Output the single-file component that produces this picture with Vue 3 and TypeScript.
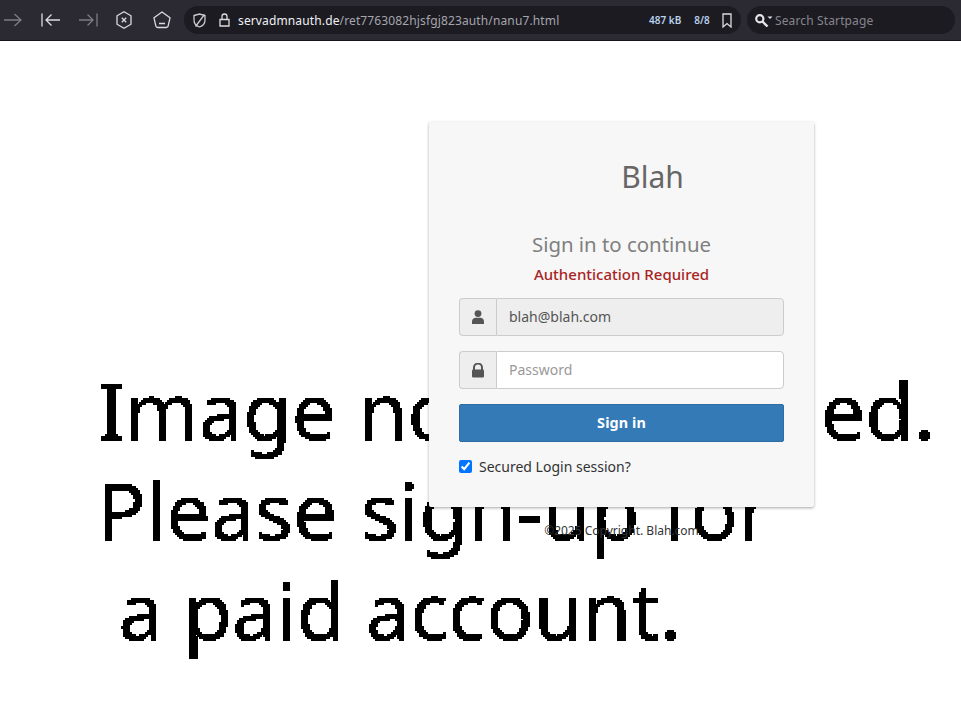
<script setup lang="ts">
const lines: string[] = ['Image not sanctioned.', 'Please sign-up for', ' a paid account.']
</script>

<template>
  <div class="root">
    <header class="toolbar">
      <div class="nav">
        <svg class="ic dim" width="18" height="16" viewBox="0 0 18 16"><path d="M0 8h17M10.500 2l6.500 6-6.500 6" /></svg>
        <svg class="ic" width="19" height="16" viewBox="0 0 19 16"><path d="M1 1.500v13M19 8H5M10.500 2.500 5 8l5.500 5.500" /></svg>
        <svg class="ic dim" width="19" height="16" viewBox="0 0 19 16"><path d="M18 1.500v13M0 8h14M8.500 2.500 14 8l-5.500 5.500" /></svg>
        <svg class="ic hex" width="16" height="18" viewBox="0 0 16 18"><path d="M8 .8l7 4v8.400l-7 4-7-4V4.800zM5.800 6.800l4.400 4.400M10.200 6.800l-4.400 4.400" /></svg>
        <svg class="ic" width="18" height="18" viewBox="0 0 18 18"><path d="M9 1l8 5.800-1.800 8.100a2 2 0 0 1-2 1.600H4.800a2 2 0 0 1-2-1.600L1 6.800zM6 12.500h6" /></svg>
      </div>
      <div class="urlbar">
        <svg class="ic shield" width="13" height="15" viewBox="0 0 13 15"><path d="M1 2.500 6.500 1 12 2.500V7c0 3.500-2.500 6-5.500 7C3.500 13 1 10.500 1 7zM11.500 1.500 2.500 13.500" /></svg>
        <svg class="ic padlock" width="11" height="14" viewBox="0 0 11 14"><path d="M1 6.500h9v6.500H1zM3 6.500V3.500a2.500 2.500 0 0 1 5 0v3" /></svg>
        <div class="url"><span class="host">servadmnauth</span><span class="tld">.de</span>/ret7763082hjsfgj823auth/nanu7.html</div>
        <span class="stat size">487 kB</span>
        <span class="stat count">8/8</span>
        <svg class="ic mark" width="10" height="15" viewBox="0 0 10 15"><path d="M1 1h8v13L5 10.500 1 14z" /></svg>
      </div>
      <div class="searchbar">
        <svg width="18" height="13" viewBox="0 0 18 13" class="lens"><circle cx="4.800" cy="4.800" r="3.600" fill="none" stroke="#e4e4e8" stroke-width="2.200" /><path d="M7.500 7.500 12.500 12.500" stroke="#e4e4e8" stroke-width="2.400" /><path d="M12.500 2.500h5l-2.500 2.500z" fill="#e4e4e8" /></svg>
        <span class="placeholder">Search Startpage</span>
      </div>
    </header>

    <main class="page">
      <svg class="defs" width="0" height="0" aria-hidden="true">
        <filter id="hard" x="0" y="0" width="100%" height="100%" color-interpolation-filters="sRGB">
          <feFlood x="0" y="0" width="1" height="1" flood-color="#000" />
          <feComposite width="2" height="2" />
          <feTile result="grid" />
          <feComposite in="SourceGraphic" in2="grid" operator="in" />
          <feComponentTransfer>
            <feFuncA type="discrete" tableValues="0 0 0 1" />
          </feComponentTransfer>
          <feMorphology operator="dilate" radius="1" />
        </filter>
      </svg>
      <div class="poster">
        <div v-for="line in lines" :key="line" class="poster-line">{{ line }}</div>
      </div>

      <section class="card">
        <h1 class="brand">Blah</h1>
        <h2 class="subtitle">Sign in to continue</h2>
        <p class="alert">Authentication Required</p>
        <div class="group">
          <span class="addon">
            <svg width="14" height="14" viewBox="0 0 14 14"><circle cx="7" cy="3.600" r="3.400" fill="#555" /><path d="M1 14v-2.500C1 9 3 7.800 4.500 7.800h5C11 7.800 13 9 13 11.500V14z" fill="#555" /></svg>
          </span>
          <input class="field readonly" type="text" value="blah@blah.com" readonly />
        </div>
        <div class="group">
          <span class="addon">
            <svg width="14" height="15" viewBox="0 0 14 15"><path d="M3 7V4.500a4 4 0 0 1 8 0V7" fill="none" stroke="#555" stroke-width="2" /><rect x="1" y="6.500" width="12" height="8" rx="1.200" fill="#555" /></svg>
          </span>
          <input class="field" type="password" placeholder="Password" />
        </div>
        <button class="submit" type="button">Sign in</button>
        <label class="check"><input type="checkbox" checked /><span>Secured Login session?</span></label>
      </section>

      <footer class="copy">©2025 Copyright. Blah.com</footer>
    </main>
  </div>
</template>

<style>
html, body { margin: 0; background: #fff; }
</style>

<style scoped>
.root { width: 961px; height: 720px; overflow: hidden; font-family: "Noto Sans", sans-serif; }
.toolbar { height: 40px; box-sizing: content-box; border-bottom: 1px solid #14141a; background: #2b2a33; display: flex; align-items: center; padding: 0 6px 0 4px; }
.nav { display: flex; align-items: center; width: 180px; flex: none; gap: 19px; }
.ic { fill: none; stroke: #dcdce0; stroke-width: 1.300; flex: none; }
.dim { stroke: #7d7c83; }
.hex { margin-right: 1px; transform: translateX(-1px); }
.urlbar { width: 557px; height: 28px; flex: none; box-sizing: border-box; border-radius: 14px; background: #1c1b22; display: flex; align-items: center; padding-left: 9px; color: #a5a5ac; font-size: 12px; }
.shield { stroke: #c9c9ce; }
.padlock { margin-left: 13px; }
.url { margin-left: 8px; width: 411px; flex: none; white-space: nowrap; letter-spacing: .13px; }
.host, .tld { color: #f0f0f4; }
.stat { font-size: 10px; font-weight: 600; color: #b9d2ee; flex: none; }
.count { margin-left: 13px; }
.mark { margin-left: 12px; }
.searchbar { width: 208px; height: 28px; flex: none; box-sizing: border-box; margin-left: 6px; border-radius: 14px; background: #1c1b22; display: flex; align-items: center; padding-left: 8px; }
.lens { flex: none; }
.placeholder { color: #86858c; font-size: 12px; margin-left: 2px; letter-spacing: .13px; }
.page { position: relative; height: 679px; background: #fff; }
.defs { position: absolute; }
.poster { padding: 319px 0 0 98px; filter: url(#hard); color: #000; font-size: 79px; line-height: 100px; white-space: pre; }
.poster-line { height: 100px; }
.poster-line:nth-child(1) { word-spacing: 2px; }
.poster-line:nth-child(2) { word-spacing: 3px; }
.card { position: absolute; left: 429px; top: 81px; width: 385px; height: 385px; box-sizing: border-box; padding: 30px; background: #f7f7f7; border-radius: 2px; box-shadow: 0 1px 3px rgba(0, 0, 0, .35); }
.brand { margin: 0 0 0 62px; font-size: 30px; font-weight: 400; line-height: 49px; color: #666; text-align: center; }
.subtitle { margin: 29px 0 0; font-size: 20.400px; font-weight: 400; line-height: 28px; text-align: center; color: #808080; }
.alert { margin: 6px 0 0; font-size: 15px; font-weight: 500; line-height: 20px; text-align: center; color: #a82424; }
.group { display: flex; height: 38px; margin-top: 15px; }
.alert + .group { margin-top: 14px; }
.addon { width: 37px; box-sizing: border-box; flex: none; display: flex; align-items: center; justify-content: center; background: #eee; border: 1px solid #ccc; border-right: 0; border-radius: 4px 0 0 4px; }
.field { flex: 1; min-width: 0; box-sizing: border-box; padding: 0 12px 2px; border: 1px solid #ccc; border-radius: 0 4px 4px 0; outline: 0; background: #fff; font: 14px "Noto Sans", sans-serif; color: #555; }
.field.readonly { background: #eee; }
.field::placeholder { color: #999; opacity: 1; }
.submit { display: block; width: 100%; height: 38px; margin-top: 15px; padding: 0 0 2px; border: 1px solid #2e6da4; border-radius: 2px; background: #337ab7; color: #fff; font: 700 14.400px "Noto Sans", sans-serif; letter-spacing: .1px; }
.check { display: flex; align-items: center; gap: 7px; margin-top: 14px; height: 20px; font-size: 14px; color: #333; }
.check input { width: 13px; height: 13px; margin: 0; accent-color: #0075ff; }
.copy { position: absolute; left: 429px; width: 385px; top: 482px; text-align: center; font-size: 12px; line-height: 16px; color: #333; }
</style>
